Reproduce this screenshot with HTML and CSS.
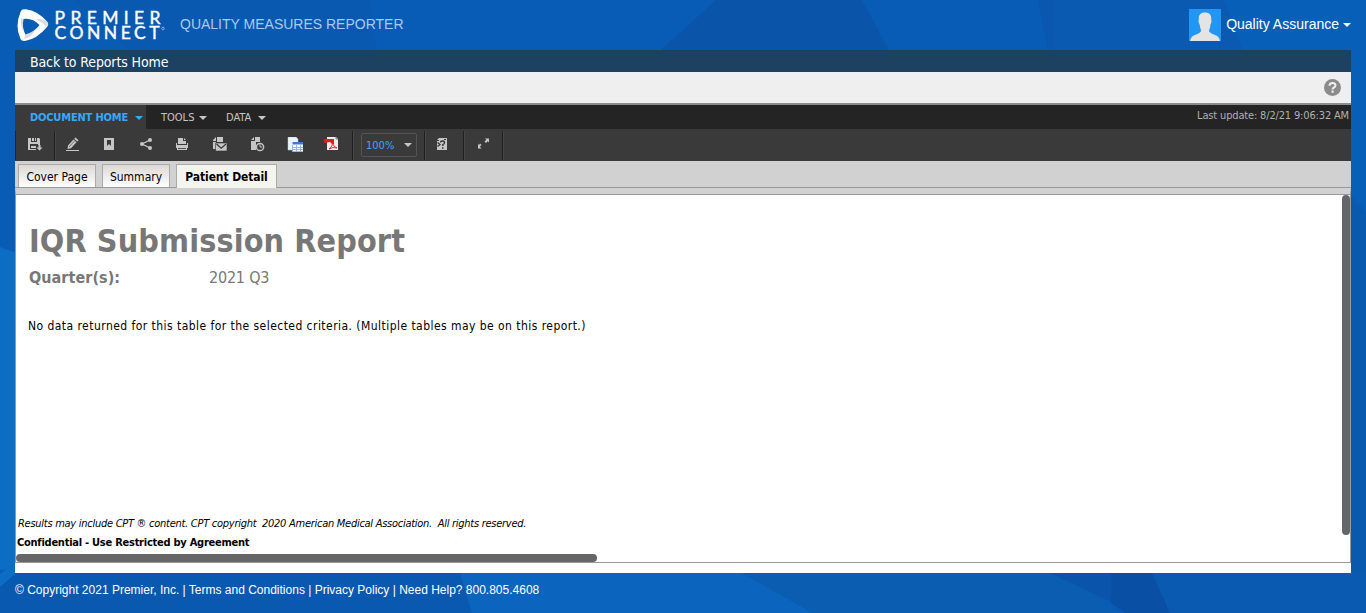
FILE: index.html
```html
<!DOCTYPE html>
<html lang="en">
<head>
<meta charset="utf-8">
<title>Quality Measures Reporter</title>
<link rel="stylesheet" href="styles.css">
</head>
<body>
<svg class="backdrop" viewBox="0 0 1366 613" aria-hidden="true">
  <rect width="1366" height="613" fill="#085cb5"/>
  <path d="M42 0H370L376 50H50L0 15V0Z" fill="#0959b0"/>
  <path d="M0 0H75L128 50H0Z" fill="#085cb4"/>
  <path d="M716 0H862L889 50H661Z" fill="#0a54a9"/>
  <path d="M1038 0H1054V50H1048Z" fill="#0957ae"/>
  <path d="M1054 0H1224L1242 50H1054Z" fill="#095ab0"/>
  <path d="M1224 0H1366V613H1340V50H1242Z" fill="#085fb8"/>
  <path d="M1340 185L1366 212V613H1340Z" fill="#095aaf"/>
  <path d="M0 247L20 254V570H0Z" fill="#0b6dc4"/>
  <path d="M0 573H480V613H0Z" fill="#0959b1"/>
  <path d="M0 574L15 563V574L0 587Z" fill="#0b6dc4"/>
  <path d="M460 573H742L813 613H472Z" fill="#0b65be"/>
  <path d="M742 573H1060L1120 613H813Z" fill="#0b5db1"/>
  <path d="M1050 573H1114V603Z" fill="#0a54ab"/>
  <path d="M1111 573H1152L1170 613H1125L1111 603Z" fill="#094fa3"/>
  <path d="M1152 573H1366V613H1170Z" fill="#095ab0"/>
</svg>

<header class="masthead">
  <svg class="logo" width="150" height="36" viewBox="0 0 150 36">
    <path fill="#fff" fill-rule="evenodd" d="M5 .8Q6-.1 9 .3Q20 1.500 30 12.500Q32.500 15 30 18Q20 30 8 32Q4.500 32.300 3.500 30Q-2.500 17 3.500 3Q4 1.500 5 .8ZM6.500 10Q4.500 18 8.500 25.500Q17 23.500 22.500 16Q15 8.500 6.500 10Z"/>
    <path fill="#aab2be" d="M18 10.500Q24 12 29 17.500L31 16L30.500 13Q25 9 18 10.500ZM4 9L6.500 10Q5 17 6.800 22.500Q3 17 4 9ZM8.500 25.500Q14 24 18.500 20Q15 28 7 30Z" opacity=".45"/>
    <text class="wordmark" x="37.500" y="14.500" textLength="106">PREMIER</text>
    <text class="wordmark" x="37.500" y="29.700" textLength="105">CONNECT</text>
    <circle cx="146" cy="19.500" r="1.300" fill="none" stroke="#9dc0e4" stroke-width=".8"/>
  </svg>
  <span class="product">QUALITY MEASURES REPORTER</span>
  <div class="account">
    <svg class="avatar" width="32" height="32" viewBox="0 0 32 32">
      <rect width="32" height="32" fill="#2196f3"/>
      <path fill="#e4e4e4" d="M16 3.500C11.500 3.500 9.500 6 9.800 10L9.500 13L10.800 16C11 19 12 20 12 22Q11.500 24 6 26Q2 27 1 32H31Q30 27 26 26Q20.500 24 20 22C20 20 21.500 19 21.300 16L22.500 13L22.200 10C22.500 6 20.500 3.500 16 3.500Z"/>
    </svg>
    <span class="account-name">Quality Assurance</span>
    <i class="caret caret-white"></i>
  </div>
</header>

<main class="page">
  <nav class="crumb"><a>Back to Reports Home</a></nav>
  <div class="helpbar">
    <svg width="17" height="17" viewBox="0 0 17 17"><circle cx="8.500" cy="8.500" r="8.500" fill="#8b8b8b"/><path d="M5.500 6.800Q5.500 4 8.500 4Q11.500 4 11.500 6.500Q11.500 8 9.700 8.700Q8.600 9.200 8.600 10.500" fill="none" stroke="#efefef" stroke-width="2"/><rect x="7.500" y="11.500" width="2.200" height="2.200" fill="#efefef"/></svg>
  </div>
  <div class="menubar">
    <div class="menu active"><span>DOCUMENT HOME</span><i class="caret"></i></div>
    <div class="menu tools"><span>TOOLS</span><i class="caret"></i></div>
    <div class="menu"><span>DATA</span><i class="caret"></i></div>
    <span class="updated">Last update: 8/2/21 9:06:32 AM</span>
  </div>
  <div class="toolbar">
    <div class="group save">
      <svg viewBox="0 0 16 16"><path fill="#c6c6c6" d="M1 1H4V5H10V1H12L13 2V8H11V7H3V12H9V13H1ZM5 1H7V4H5ZM8 1H9V4H8ZM4 9H9V11H4ZM11.500 8H13.500V10.500H15.500L12.500 13.500L9.500 10.500H11.500Z"/></svg>
    </div>
    <div class="group main">
      <svg viewBox="0 0 16 16"><path fill="#c6c6c6" d="M3 8.500L8.500 2.500L11.500 5.300L6 11.300L2.500 12ZM9.200 1.800L10.500.5L13.500 3.300L12.200 4.600Z"/><path d="M1 13.500H14" stroke="#c6c6c6"/><path d="M4 10L9.500 4" stroke="#555" stroke-width=".7"/></svg>
      <svg viewBox="1 0 16 16"><path fill="#c6c6c6" fill-rule="evenodd" d="M3 1H13V13H3ZM6 3V9L8 7L10 9V3Z"/></svg>
      <svg viewBox="1 0 16 16"><path d="M12 3L4 7L12 11" fill="none" stroke="#c6c6c6" stroke-width="1.300"/><g fill="#c6c6c6"><circle cx="12" cy="3" r="2"/><circle cx="4" cy="7" r="2"/><circle cx="12" cy="11" r="2"/></g></svg>
      <svg viewBox="2 0 16 16"><path fill="#c6c6c6" d="M4 1H9V4H12V7H4ZM10 1L12 3H10ZM2 6H3V8H13V6H14V11H2ZM4 12H12V13H4Z"/><path fill="#c6c6c6" d="M3 10H13V13H3Z"/><path d="M4 11.500H12" stroke="#555"/></svg>
      <svg viewBox="2 0 16 16"><path fill="#c6c6c6" d="M6 0H12V5H5V12H2V5H6ZM2 3L5 0V4H2Z"/><path fill="#c6c6c6" stroke="#333" stroke-width=".6" d="M4.500 6H16V14H4.500Z"/><path d="M5.500 7L10.200 11.200L15 7" fill="none" stroke="#333" stroke-width="1.200"/></svg>
      <svg viewBox="1 0 16 16"><path fill="#c6c6c6" d="M6 0H11V5H7V13H2V4H6ZM2 3L5 0V3Z"/><circle cx="11" cy="10" r="3.600" fill="#3a3a3a" stroke="#c6c6c6" stroke-width="1.500"/><path d="M11 7.500V10H13" fill="none" stroke="#c6c6c6"/></svg>
      <svg viewBox="-1 0 16 16"><path fill="#eef3fa" stroke="#b5c4d8" stroke-width=".5" d="M0 0H8L10 2V13H0Z"/><path d="M4.500 5H16V15H4.500Z" fill="#fff"/><path d="M4.500 5H16V7.500H4.500Z" fill="#3f78d0"/><path d="M4.500 8V15M8.500 8V15M12.500 8V15M4.500 10.500H16M4.500 12.500H16M4.500 14.500H16" stroke="#7fa6df" stroke-width=".8"/></svg>
      <svg viewBox="1 0 16 16"><path fill="#eee" d="M4 0H13L15 2V13H4Z"/><path d="M13 0V2H15" fill="none" stroke="#777"/><path fill="#e02018" d="M1 2H11V7H9L7 5L1 6Z"/><path d="M6 12Q10 9 9.500 6Q10.500 10 14 11Q10 9.500 6 12Z" fill="none" stroke="#e02018" stroke-width=".9"/></svg>
    </div>
    <div class="group zoom"><div class="select"><span>100%</span><i class="caret"></i></div></div>
    <div class="group single">
      <svg viewBox="2 0 16 16"><path fill="#c6c6c6" d="M6 1H14V13H4V4H6ZM4 3L6 1V3Z"/><path d="M7.500 5.500Q7.500 4 9.500 4Q11.500 4 11.500 5.700Q11.500 7 9.800 7.500V9M4.500 5.500L7 7.500L4.500 9.500" fill="none" stroke="#333" stroke-width="1.300"/><path d="M9 10.300H10.500V11.700H9ZM11 2H13V3H11Z" fill="#333"/></svg>
    </div>
    <div class="group single">
      <svg viewBox="0 0 16 16"><path fill="#c6c6c6" d="M10 2H14V6L12.700 4.700L11 6.500L9.500 5L11.300 3.300ZM5 7L6.500 8.500L4.800 10.200L6.500 12H3V7.500L4 8.500Z" transform="translate(1 -.5)"/></svg>
    </div>
  </div>
  <div class="tabs">
    <div class="tab cover">Cover Page</div>
    <div class="tab summary">Summary</div>
    <div class="tab selected">Patient Detail</div>
  </div>
  <section class="document">
    <h1>IQR Submission Report</h1>
    <dl class="criteria"><dt>Quarter(s):</dt><dd>2021 Q3</dd></dl>
    <p class="empty">No data returned for this table for the selected criteria. (Multiple tables may be on this report.)</p>
    <p class="notice">Results may include CPT ® content. CPT copyright&nbsp; 2020 American Medical Association.&nbsp; All rights reserved.</p>
    <p class="confidential">Confidential - Use Restricted by Agreement</p>
    <i class="scroll-x"></i>
    <i class="scroll-y"></i>
  </section>
</main>
<footer class="footer">© Copyright 2021 Premier, Inc. | Terms and Conditions | Privacy Policy | Need Help? 800.805.4608</footer>
</body>
</html>
```
FILE: styles.css
```css
body {
  margin: 0;
  width: 1366px;
  height: 613px;
  overflow: hidden;
  font-family: "DejaVu Sans Condensed", "DejaVu Sans", sans-serif;
  font-stretch: condensed;
  font-size: 12px;
  white-space: nowrap;
}
svg { display: block; flex: none; }
h1, p, dl, dd { margin: 0; }

.backdrop { position: absolute; inset: 0; z-index: -1; width: 1366px; height: 613px; }

.masthead { display: flex; align-items: center; height: 50px; padding: 0 15px 0 17px; box-sizing: border-box; font-family: "Liberation Sans", Arial, sans-serif; }
.logo { overflow: visible; margin-top: 4px; }
.wordmark { font: 17.5px Lato, sans-serif; fill: #fff; stroke: #fff; stroke-width: .4px; }
.product { margin: -2px 0 0 13px; font-size: 14px; color: #a9cbee; }
.account { display: flex; align-items: center; margin-left: auto; color: #fff; font-size: 14px; }
.account-name { margin: -2px 4px 0 5px; }
.caret { border: 4px solid transparent; border-top-color: #c6c6c6; border-bottom: 0; }
.caret-white { border-top-color: #fff; }
.account .caret { margin-top: -1px; }

.page { width: 1336px; height: 523px; margin-left: 15px; background: #fff; }
.crumb { height: 22px; padding: 0 15px; background: #1c4161; color: #fff; font-size: 14px; line-height: 24px; letter-spacing: -.12px; }
.helpbar { display: flex; justify-content: flex-end; height: 31px; padding: 7px 10px 0 0; box-sizing: border-box; background: #efefef; }
.menubar { display: flex; height: 24px; border-top: 2px solid #8c8c8c; background: #242424; color: #c6c6c6; font-size: 11px; line-height: 25px; }
.menu { display: flex; align-items: center; gap: 7px; padding-left: 15px; }
.menu .caret { margin-top: 2px; }
.menu.active { width: 131px; box-sizing: border-box; background: #3a3a3a; color: #33a9ff; font-weight: bold; letter-spacing: -.18px; }
.menu.active .caret { border-top-color: #33a9ff; }
.menu.tools { width: 65px; box-sizing: border-box; gap: 5px; }
.updated { margin-left: auto; padding-right: 2px; line-height: 21px; letter-spacing: -.16px; color: #b0b0b0; }

.toolbar { display: flex; align-items: center; height: 32px; background: #3a3a3a; }
.toolbar svg { width: 16px; height: 16px; }
.group { display: flex; align-items: center; height: 29px; box-sizing: border-box; border-right: 1px solid #202020; box-shadow: 1px 0 #464646; }
.save { width: 40px; padding-left: 11px; border-left: 1px solid #202020; }
.main { width: 298px; gap: 21px; padding-left: 10px; }
.zoom { width: 72px; padding-left: 8px; }
.single { width: 39px; padding-left: 10px; }
.select { display: flex; align-items: center; justify-content: space-between; width: 56px; height: 24px; box-sizing: border-box; padding: 0 4px; border: 1px solid #555; border-radius: 2px; color: #33a9ff; font-size: 11px; }

.tabs { display: flex; align-items: flex-end; gap: 5px; height: 27px; box-sizing: border-box; padding-left: 3px; background: #d1d1d1; border-bottom: 1px solid #999; }
.tab { height: 23px; box-sizing: border-box; border: 1px solid #aaa; border-bottom: 0; background: linear-gradient(#dcd8d6, #fff); text-align: center; line-height: 24px; }
.cover { width: 78px; }
.summary { width: 68px; margin-left: 1px; }
.selected { width: 101px; margin: 0 0 -1px 1px; height: 24px; background: #f5f5ef; font-weight: bold; letter-spacing: -.1px; }

.document { position: relative; height: 375px; box-sizing: border-box; border: 1px solid #999; border-top: 6px solid #d1d1d1; box-shadow: inset 0 1px #999; }
h1 { padding: 26px 0 0 13px; font-size: 32px; line-height: 42px; letter-spacing: .12px; color: #777; }
.criteria { display: flex; padding: 5px 0 0 13px; font-size: 16px; line-height: 22px; color: #777; }
dt { width: 180px; font-weight: bold; letter-spacing: .05px; }
dd { letter-spacing: -.2px; }
.empty { padding: 27px 0 0 12px; line-height: 20px; letter-spacing: .455px; }
.notice { padding: 178px 0 0 2px; font-size: 11px; line-height: 20px; font-style: italic; letter-spacing: -.27px; }
.confidential { padding-left: 1px; font-size: 11px; font-weight: bold; line-height: 18px; letter-spacing: -.25px; }
.scroll-x, .scroll-y { position: absolute; border-radius: 4px; background: #666; }
.scroll-x { left: 0; bottom: 0; width: 581px; height: 8px; }
.scroll-y { right: 0; top: 1px; width: 8px; height: 340px; }

.footer { padding-left: 15px; font: 12px/34px "Liberation Sans", Arial, sans-serif; color: #fff; }
```
